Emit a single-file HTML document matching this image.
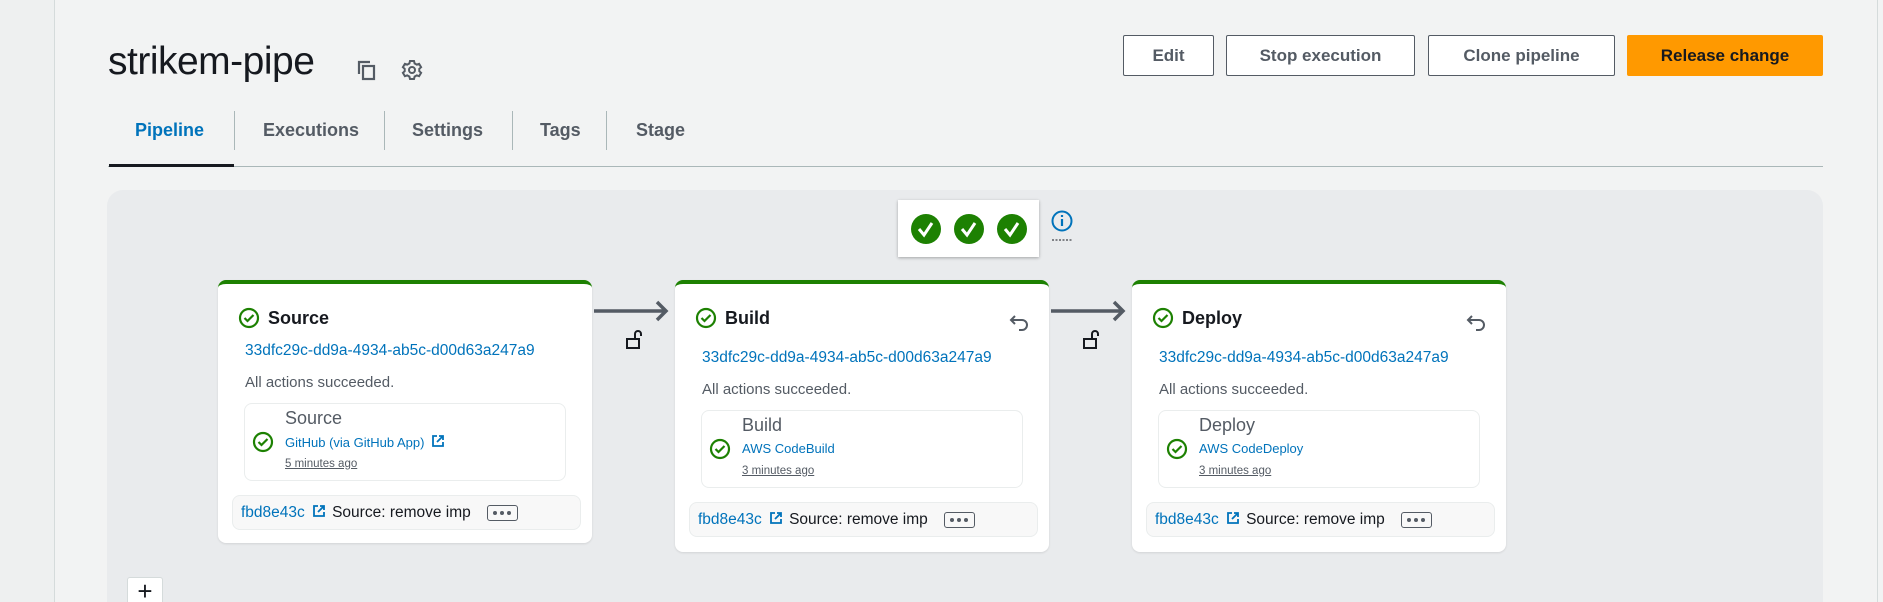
<!DOCTYPE html>
<html><head><meta charset="utf-8"><style>
*{box-sizing:border-box;margin:0;padding:0}
html,body{width:1883px;height:602px;overflow:hidden}
body{background:#f2f3f3;font-family:"Liberation Sans",sans-serif;position:relative;color:#16191f}
.abs{position:absolute}
.side{left:0;top:0;width:55px;height:602px;background:#eef0f0;border-right:1px solid #d5dbdb}
.rline{left:1877px;top:0;width:1px;height:602px;background:#d5dbdb}
h1{position:absolute;left:108px;top:40px;font-size:39px;font-weight:400;color:#16191f;letter-spacing:-0.5px}
.btn{position:absolute;top:35px;height:41px;border:1px solid #545b64;border-radius:2px;background:#fff;font-size:17px;font-weight:700;color:#545b64;display:flex;align-items:center;justify-content:center}
.tab{position:absolute;top:120px;font-size:18px;font-weight:700;color:#545b64}
.div{position:absolute;top:111px;width:1px;height:39px;background:#aab7b8}
.panel{left:107px;top:190px;width:1716px;height:412px;background:#e9ebed;border-radius:16px 16px 0 0}
.card{position:absolute;top:280px;width:374px;background:#fff;border-radius:8px;border-top:4px solid #1d8102;box-shadow:0 1px 2px rgba(0,0,0,.1)}
.ch{position:absolute;left:20px;top:23px;font-size:18px;font-weight:700;display:flex;align-items:center;gap:8px}
.link{color:#0073bb}
.cid{position:absolute;left:27px;font-size:15.5px;color:#0073bb}
.ok{position:absolute;left:27px;font-size:15px;color:#545b64}
.act{position:absolute;left:26px;width:322px;height:78px;border:1px solid #eaeded;border-radius:8px}
.foot{position:absolute;left:14px;width:349px;height:35px;background:#f8f8f8;border:1px solid #eaeded;border-radius:8px;font-size:15.5px;display:flex;align-items:center;padding-left:8px;gap:6px}
.dots{display:inline-flex;align-items:center;justify-content:center;gap:3px;width:31px;height:16px;border:1.5px solid #545b64;border-radius:3px;margin-left:10px}
.dots i{width:4px;height:4px;border-radius:2px;background:#545b64}
.ext{display:inline-block;vertical-align:-1px;margin-left:3px}
</style></head><body>
<div class="abs side"></div><div class="abs rline"></div>
<h1>strikem-pipe</h1>
<svg class="abs" style="left:356px;top:59px" width="22" height="22" viewBox="0 0 22 22" fill="none" stroke="#545b64" stroke-width="2.2"><path d="M3 15V3h11"/><rect x="7" y="7" width="11" height="13"/></svg>
<svg class="abs" style="left:400px;top:58px" width="24" height="24" viewBox="0 0 24 24" fill="none" stroke="#545b64" stroke-width="2"><circle cx="12" cy="12" r="3"/><path d="M10 3h4l.6 2.4 2.2 1.2 2.3-.8 2 3.4-1.8 1.6v2.4l1.8 1.6-2 3.4-2.3-.8-2.2 1.2L14 21h-4l-.6-2.4-2.2-1.2-2.3.8-2-3.4 1.8-1.6v-2.4L2.9 9.2l2-3.4 2.3.8 2.2-1.2z"/></svg>
<div class="btn" style="left:1123px;width:91px">Edit</div>
<div class="btn" style="left:1226px;width:189px">Stop execution</div>
<div class="btn" style="left:1428px;width:187px">Clone pipeline</div>
<div class="btn" style="left:1627px;width:196px;background:#ff9900;border-color:#ff9900;color:#16191f">Release change</div>
<div class="tab" style="left:135px;color:#0073bb">Pipeline</div>
<div class="div" style="left:234px"></div>
<div class="tab" style="left:263px">Executions</div>
<div class="div" style="left:384px"></div>
<div class="tab" style="left:412px">Settings</div>
<div class="div" style="left:512px"></div>
<div class="tab" style="left:540px">Tags</div>
<div class="div" style="left:606px"></div>
<div class="tab" style="left:636px">Stage</div>
<div class="abs" style="left:108px;top:166px;width:1715px;height:1px;background:#aab7b8"></div>
<div class="abs" style="left:109px;top:164px;width:125px;height:3px;background:#16191f"></div>
<div class="abs panel"></div>
<div class="abs" style="left:898px;top:200px;width:141px;height:57px;background:#fff;box-shadow:0 1px 3px rgba(0,0,0,.3)"></div>
<svg class="abs" style="left:898px;top:200px" width="141" height="57"><g fill="#1d8102"><circle cx="28" cy="29" r="15"/><circle cx="71" cy="29" r="15"/><circle cx="114" cy="29" r="15"/></g><g fill="none" stroke="#fff" stroke-width="3"><path d="M21 29l5 6 8-12M64 29l5 6 8-12M107 29l5 6 8-12"/></g></svg>
<svg class="abs" style="left:1050px;top:209px" width="24" height="34"><circle cx="12" cy="12" r="9.5" fill="none" stroke="#0073bb" stroke-width="2"/><path d="M12 10v7M12 6v2" stroke="#0073bb" stroke-width="2.2"/><path d="M2 31h20" stroke="#16191f" stroke-dasharray="2 1.5"/></svg>

<svg class="abs" style="left:594px;top:300px" width="80" height="60"><path d="M0 11h72M63 2l9 9-9 9" fill="none" stroke="#545b64" stroke-width="3.5"/><g transform="translate(32,30)" fill="none" stroke="#16191f" stroke-width="2"><rect x="1" y="9" width="12" height="9"/><path d="M9 9V4a3 3 0 0 1 6 0v2"/></g></svg>
<svg class="abs" style="left:1051px;top:300px" width="80" height="60"><path d="M0 11h72M63 2l9 9-9 9" fill="none" stroke="#545b64" stroke-width="3.5"/><g transform="translate(32,30)" fill="none" stroke="#16191f" stroke-width="2"><rect x="1" y="9" width="12" height="9"/><path d="M9 9V4a3 3 0 0 1 6 0v2"/></g></svg>

<!-- Source -->
<div class="card" style="left:218px;height:263px">
 <div class="ch"><svg width="22" height="22"><circle cx="11" cy="11" r="9" fill="none" stroke="#1d8102" stroke-width="2.2"/><path d="M6.5 11l3 3 6-6" fill="none" stroke="#1d8102" stroke-width="2.2"/></svg>Source</div>
 <div class="cid" style="top:58px">33dfc29c-dd9a-4934-ab5c-d00d63a247a9</div>
 <div class="ok" style="top:90px">All actions succeeded.</div>
 <div class="act" style="top:119px">
  <div class="abs" style="left:40px;top:4px;font-size:18px;color:#545b64">Source</div>
  <svg class="abs" style="left:7px;top:27px" width="22" height="22"><circle cx="11" cy="11" r="9" fill="none" stroke="#1d8102" stroke-width="2.2"/><path d="M6.5 11l3 3 6-6" fill="none" stroke="#1d8102" stroke-width="2.2"/></svg>
  <div class="abs link" style="left:40px;top:30px;font-size:13px">GitHub (via GitHub App) <svg class="ext" width="14" height="14" fill="none" stroke="#0073bb" stroke-width="1.8"><path d="M6 2H2v10h10V8M8 2h4v4M12 2L6 8"/></svg></div>
  <div class="abs" style="left:40px;top:54px;font-size:11.5px;color:#545b64;text-decoration:underline">5 minutes ago</div>
 </div>
 <div class="foot" style="top:211px"><span class="link">fbd8e43c <svg class="ext" width="14" height="14" fill="none" stroke="#0073bb" stroke-width="1.8"><path d="M6 2H2v10h10V8M8 2h4v4M12 2L6 8"/></svg></span><span>Source: remove imp</span><span class="dots"><i></i><i></i><i></i></span></div>
</div>

<!-- Build -->
<div class="card" style="left:675px;height:272px">
 <div class="ch"><svg width="22" height="22"><circle cx="11" cy="11" r="9" fill="none" stroke="#1d8102" stroke-width="2.2"/><path d="M6.5 11l3 3 6-6" fill="none" stroke="#1d8102" stroke-width="2.2"/></svg>Build</div>
 <svg class="abs" style="left:333px;top:28px" width="24" height="22" fill="none" stroke="#545b64" stroke-width="2"><path d="M7 4L3 8l4 4M3 8h11a5 5 0 0 1 0 10h-3"/></svg>
 <div class="cid" style="top:65px">33dfc29c-dd9a-4934-ab5c-d00d63a247a9</div>
 <div class="ok" style="top:97px">All actions succeeded.</div>
 <div class="act" style="top:126px">
  <div class="abs" style="left:40px;top:4px;font-size:18px;color:#545b64">Build</div>
  <svg class="abs" style="left:7px;top:27px" width="22" height="22"><circle cx="11" cy="11" r="9" fill="none" stroke="#1d8102" stroke-width="2.2"/><path d="M6.5 11l3 3 6-6" fill="none" stroke="#1d8102" stroke-width="2.2"/></svg>
  <div class="abs link" style="left:40px;top:30px;font-size:13px">AWS CodeBuild</div>
  <div class="abs" style="left:40px;top:54px;font-size:11.5px;color:#545b64;text-decoration:underline">3 minutes ago</div>
 </div>
 <div class="foot" style="top:218px"><span class="link">fbd8e43c <svg class="ext" width="14" height="14" fill="none" stroke="#0073bb" stroke-width="1.8"><path d="M6 2H2v10h10V8M8 2h4v4M12 2L6 8"/></svg></span><span>Source: remove imp</span><span class="dots"><i></i><i></i><i></i></span></div>
</div>

<!-- Deploy -->
<div class="card" style="left:1132px;height:272px">
 <div class="ch"><svg width="22" height="22"><circle cx="11" cy="11" r="9" fill="none" stroke="#1d8102" stroke-width="2.2"/><path d="M6.5 11l3 3 6-6" fill="none" stroke="#1d8102" stroke-width="2.2"/></svg>Deploy</div>
 <svg class="abs" style="left:333px;top:28px" width="24" height="22" fill="none" stroke="#545b64" stroke-width="2"><path d="M7 4L3 8l4 4M3 8h11a5 5 0 0 1 0 10h-3"/></svg>
 <div class="cid" style="top:65px">33dfc29c-dd9a-4934-ab5c-d00d63a247a9</div>
 <div class="ok" style="top:97px">All actions succeeded.</div>
 <div class="act" style="top:126px">
  <div class="abs" style="left:40px;top:4px;font-size:18px;color:#545b64">Deploy</div>
  <svg class="abs" style="left:7px;top:27px" width="22" height="22"><circle cx="11" cy="11" r="9" fill="none" stroke="#1d8102" stroke-width="2.2"/><path d="M6.5 11l3 3 6-6" fill="none" stroke="#1d8102" stroke-width="2.2"/></svg>
  <div class="abs link" style="left:40px;top:30px;font-size:13px">AWS CodeDeploy</div>
  <div class="abs" style="left:40px;top:54px;font-size:11.5px;color:#545b64;text-decoration:underline">3 minutes ago</div>
 </div>
 <div class="foot" style="top:218px"><span class="link">fbd8e43c <svg class="ext" width="14" height="14" fill="none" stroke="#0073bb" stroke-width="1.8"><path d="M6 2H2v10h10V8M8 2h4v4M12 2L6 8"/></svg></span><span>Source: remove imp</span><span class="dots"><i></i><i></i><i></i></span></div>
</div>

<div class="abs" style="left:127px;top:577px;width:36px;height:30px;background:#fff;border:1px solid #d5dbdb;border-radius:3px;font-size:26px;line-height:26px;text-align:center;color:#16191f">+</div>
</body></html>
